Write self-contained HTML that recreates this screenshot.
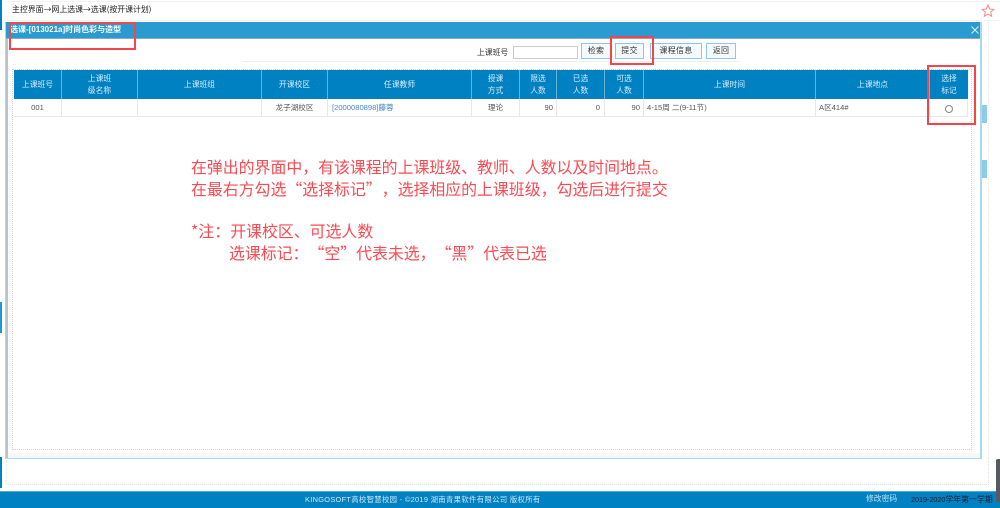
<!DOCTYPE html>
<html lang="zh">
<head>
<meta charset="utf-8">
<title>选课</title>
<style>
html,body{margin:0;padding:0;background:#fff}
body{width:1000px;height:508px;position:relative;overflow:hidden;font-family:"Liberation Sans","Noto Sans CJK SC",sans-serif}
.a{position:absolute;box-sizing:border-box}
.t{position:absolute;white-space:nowrap;filter:blur(.35px)}
.th{position:absolute;top:70px;height:29px;background:#0081c2;color:#d5ecf8;font-size:7.800px;line-height:12px;display:flex;align-items:center;justify-content:center;text-align:center;border-right:1px solid #66b3da;box-sizing:border-box;filter:blur(.3px)}
.td{position:absolute;top:99px;height:18px;background:#fff;color:#555;font-size:7.600px;line-height:18px;text-align:center;border-right:1px solid #e8e8e8;border-bottom:1px solid #e8e8e8;box-sizing:border-box;filter:blur(.3px);white-space:nowrap;overflow:hidden}
.btn{position:absolute;top:43px;height:16px;background:#f4f9fc;border:1px solid #8cc8e8;box-sizing:border-box;font-size:8px;line-height:14px;text-align:center;color:#333;letter-spacing:.3px;filter:blur(.25px)}
.box{position:absolute;border:2px solid #f4444c;box-sizing:border-box}
.red{position:absolute;white-space:nowrap;color:#fb4a52;font-family:"Noto Sans CJK SC",sans-serif;font-size:15.900px;line-height:20px;filter:blur(.25px);text-spacing-trim:space-all;font-feature-settings:"palt" 0,"chws" 0}
</style>
</head>
<body>
<div class="a" style="left:0;top:0;width:2px;height:30px;background:#0081c2"></div>
<div class="a" style="left:0;top:302px;width:2px;height:31px;background:#1d9ad6"></div>
<div class="a" style="left:0;top:457px;width:2px;height:31px;background:#0081c2"></div>
<div class="a" style="left:6px;top:1px;width:994px;height:1px;background:#f2f2f2"></div>
<div class="a" style="left:6px;top:20px;width:994px;height:1px;background:#f4f4f4"></div>
<div class="t" style="left:12px;top:4px;font-size:7.900px;line-height:12px;color:#222;font-family:'Noto Sans CJK SC',sans-serif">主控界面→网上选课→选课(按开课计划)</div>
<svg class="a" style="left:981px;top:4px" width="14" height="14" viewBox="0 0 14 14"><path d="M7 1.200 8.700 5l4.100.4-3.100 2.700.9 4.100L7 10.100l-3.600 2.100.9-4.100L1.200 5.400 5.300 5z" fill="none" stroke="#f28a8a" stroke-width="1"/></svg>

<!-- outer dotted area -->
<div class="a" style="left:6px;top:458px;width:983px;height:27px;border:1px dotted #e2e2e2;border-top:0"></div>
<div class="a" style="left:988px;top:22px;width:1px;height:436px;border-left:1px dotted #e8e8e8"></div>
<div class="a" style="left:981px;top:105px;width:6px;height:18px;background:#8fcbe9"></div>
<div class="a" style="left:981px;top:160px;width:6px;height:18px;background:#8fcbe9"></div>

<!-- dialog -->
<div class="a" style="left:5px;top:22px;width:977px;height:437px;background:#fff;border:1px solid #a9d8ef;border-right-width:2px"></div>
<div class="a" style="left:6px;top:23px;width:2px;height:435px;background:#b9c4ca"></div>
<div class="a" style="left:8px;top:453px;width:972px;height:5px;background:#f7f7f7"></div>
<div class="a" style="left:6px;top:22px;width:974px;height:17px;background:#2a9bd0;border-bottom:1px solid #8fa9b6"></div>
<div class="t" style="left:10px;top:23px;font-size:8px;line-height:13px;color:#fff;font-weight:bold">选课-[013021a]时尚色彩与造型</div>
<svg class="a" style="left:970px;top:25px" width="10" height="10" viewBox="0 0 10 10"><path d="M1.500 1.500 8.500 8.500M8.500 1.500 1.500 8.500" stroke="#d6ecf8" stroke-width="1.100"/></svg>

<!-- toolbar -->
<div class="a" style="left:242px;top:61px;width:498px;height:1px;background:#eee"></div>
<div class="t" style="left:477px;top:46px;font-size:7.800px;line-height:13px;color:#333">上课班号</div>
<div class="a" style="left:513px;top:46px;width:65px;height:13px;background:#fff;border:1px solid #ccc"></div>
<div class="btn" style="left:581px;width:30px">检索</div>
<div class="btn" style="left:615px;width:29px">提交</div>
<div class="btn" style="left:650px;width:52px">课程信息</div>
<div class="btn" style="left:706px;width:30px">返回</div>

<!-- table area -->
<div class="a" style="left:12px;top:69px;width:960px;height:381px;border:1px dotted #d2d2d2"></div>
<div class="th" style="left:14px;width:48px">上课班号</div>
<div class="th" style="left:62px;width:76px">上课班<br>级名称</div>
<div class="th" style="left:138px;width:124px">上课班组</div>
<div class="th" style="left:262px;width:66px">开课校区</div>
<div class="th" style="left:328px;width:144px">任课教师</div>
<div class="th" style="left:472px;width:48px">授课<br>方式</div>
<div class="th" style="left:520px;width:37px">限选<br>人数</div>
<div class="th" style="left:557px;width:48px">已选<br>人数</div>
<div class="th" style="left:605px;width:39px">可选<br>人数</div>
<div class="th" style="left:644px;width:172px">上课时间</div>
<div class="th" style="left:816px;width:114px">上课地点</div>
<div class="th" style="left:930px;width:38px;border-right:0">选择<br>标记</div>

<div class="td" style="left:14px;width:48px">001</div>
<div class="td" style="left:62px;width:76px"></div>
<div class="td" style="left:138px;width:124px"></div>
<div class="td" style="left:262px;width:66px">龙子湖校区</div>
<div class="td" style="left:328px;width:144px;text-align:left;padding-left:4px;color:#4a86c0">[2000080898]藤蓉</div>
<div class="td" style="left:472px;width:48px">理论</div>
<div class="td" style="left:520px;width:37px;text-align:right;padding-right:3px">90</div>
<div class="td" style="left:557px;width:48px;text-align:right;padding-right:4px">0</div>
<div class="td" style="left:605px;width:39px;text-align:right;padding-right:3px">90</div>
<div class="td" style="left:644px;width:172px;text-align:left;padding-left:3px">4-15周 二(9-11节)</div>
<div class="td" style="left:816px;width:114px;text-align:left;padding-left:3px">A区414#</div>
<div class="td" style="left:930px;width:38px;border-right:1px solid #e8e8e8"></div>
<div class="a" style="left:945px;top:105px;width:8px;height:8px;border:1px solid #888;border-radius:50%;background:#fff"></div>

<!-- annotations -->
<div class="box" style="left:9px;top:22px;width:127px;height:28px"></div>
<div class="box" style="left:610px;top:36px;width:44px;height:29px"></div>
<div class="box" style="left:927px;top:65px;width:49px;height:60px"></div>

<div class="red" style="left:191px;top:157px">在弹出的界面中，有该课程的上课班级、教师、人数以及时间地点。</div>
<div class="red" style="left:191px;top:179px">在最右方勾选“选择标记”，选择相应的上课班级，勾选后进行提交</div>
<div class="red" style="left:191px;top:221px">*注：开课校区、可选人数</div>
<div class="red" style="left:229px;top:243px">选课标记：“空”代表未选，“黑”代表已选</div>

<!-- footer -->
<div class="a" style="left:0;top:491px;width:1000px;height:17px;background:#0081c2;border-top:1px solid #4fa8d6"></div>
<div class="t" style="left:305px;top:494px;font-size:7.400px;line-height:12px;color:#cfe8f6;letter-spacing:.3px">KINGOSOFT高校智慧校园 - ©2019 湖南青果软件有限公司 版权所有</div>
<div class="t" style="left:866px;top:493px;font-size:7.800px;line-height:12px;color:#bfe0f2">修改密码</div>
<div class="t" style="left:911px;top:494px;font-size:7.900px;line-height:12px;color:#10202c"><span style="font-size:7.200px">2019-2020</span>学年第一学期</div>
<div class="a" style="left:996px;top:459px;width:4px;height:43px;background:#555a60;border-radius:2px 0 0 2px"></div>
</body>
</html>
